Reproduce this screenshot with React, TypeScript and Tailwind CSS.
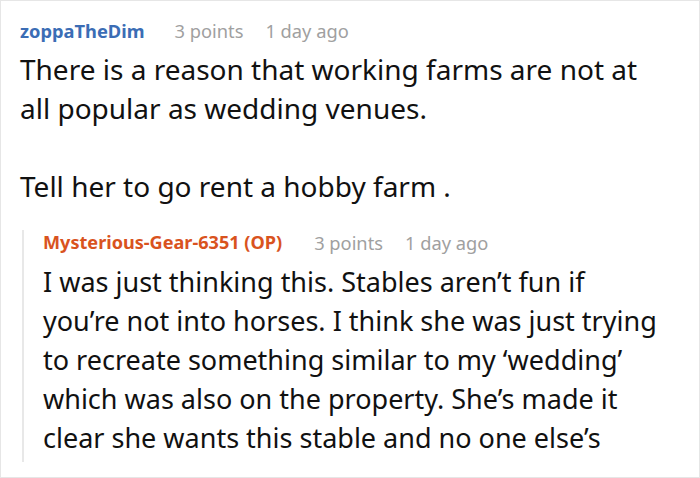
export default function App() {
  return (
    <div className="w-[700px] h-[478px] overflow-hidden bg-white border border-[#e6e6e6] pl-[19px] pr-[4px] pt-[17px] font-['Noto_Sans',sans-serif]">
      <div className="flex items-center h-[26px] text-[18.3px]">
        <span className="font-bold text-[#3b6db5]">zoppaTheDim</span>
        <span className="ml-[30px] text-[#a0a0a0]">3 points</span>
        <span className="ml-[22px] text-[#a0a0a0]">1 day ago</span>
      </div>
      <div className="mt-[6px] pr-[36px] text-[28px] leading-[39px] text-[#111]">
        <p>There is a reason that working farms are not at all popular as wedding venues.</p>
        <p className="mt-[39px]">Tell her to go rent a hobby farm .</p>
      </div>

      <div className="mt-[24px] ml-[2px] border-l-2 border-[#e8e8e8] pl-[19px] pb-[5px]">
        <div className="flex items-center h-[26px] text-[18.3px]">
          <span className="font-bold text-[18.1px] text-[#d9531e]">Mysterious-Gear-6351 (OP)</span>
          <span className="ml-[32px] text-[#a0a0a0]">3 points</span>
          <span className="ml-[22px] text-[#a0a0a0]">1 day ago</span>
        </div>
        <p className="mt-[6px] whitespace-nowrap text-[27px] leading-[39px] text-[#111]">
          I was just thinking this. Stables aren’t fun if
          <br />
          you’re not into horses. I think she was just trying
          <br />
          to recreate something similar to my ‘wedding’
          <br />
          which was also on the property. She’s made it
          <br />
          clear she wants this stable and no one else’s
        </p>
      </div>
    </div>
  )
}
